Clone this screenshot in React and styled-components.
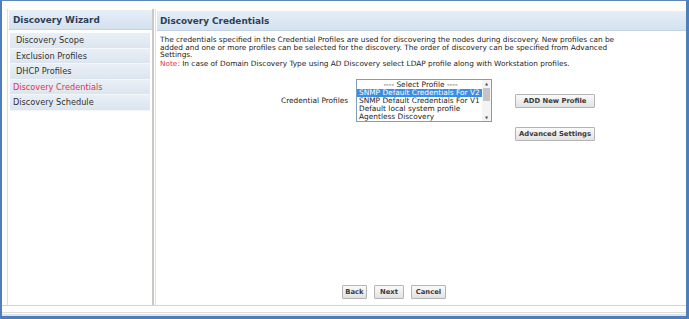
import React from 'react';
import styled, { createGlobalStyle } from 'styled-components';

const GlobalStyle = createGlobalStyle`
  html, body {
    margin: 0;
    padding: 0;
    background: #ffffff;
  }
  body {
    font-family: "DejaVu Sans", Verdana, sans-serif;
    color: #222;
  }
`;

const Window = styled.div`
  width: 689px;
  height: 319px;
  box-sizing: border-box;
  border-top: 1px solid #5d87b8;
  border-left: 2px solid #4f7fb8;
  border-right: 3px solid #4f7fb8;
  border-bottom: 3px solid #4f7fb8;
  background: #fffdf8;
  display: flex;
  flex-direction: column;
`;

const Body = styled.div`
  flex: 1;
  display: flex;
  padding: 8px 0 0 5px;
  min-height: 0;
`;

const Footer = styled.div`
  height: 10px;
  border-top: 1px solid #d4d4d4;
  background: linear-gradient(#ffffff 0, #ffffff 6px, #e4dcd4 6px, #e4dcd4 7px, #fbfaf5 7px, #fbfaf5 8px, #d9e6f5 8px);
`;

const Sidebar = styled.div`
  width: 143px;
  background: #fff;
  border-left: 1px solid #e6ddd4;
  border-right: 2px solid #c9c9c9;
  display: flex;
  flex-direction: column;
  padding: 1px 0 0 1px;
`;

const PanelHeader = styled.div`
  height: ${(p) => p.$h}px;
  display: flex;
  align-items: center;
  padding-left: ${(p) => p.$pad}px;
  background: linear-gradient(#e6eef7, #d4e1ef);
  border-bottom: 1px solid #c3d2e4;
  font-weight: bold;
  font-size: 8.9px;
  color: #2d3f55;
  white-space: nowrap;
`;

const Menu = styled.div`
  display: flex;
  flex-direction: column;
  padding: 3px 2px 0 1px;
`;

const MenuItem = styled.div`
  height: 14.5px;
  display: flex;
  align-items: center;
  padding-left: ${(p) => (p.$active || p.$last ? 3 : 6)}px;
  background: linear-gradient(#e9eff5, #dce5ef);
  border-bottom: 1px solid #f4f7fa;
  font-size: 8.2px;
  color: ${(p) => (p.$active ? '#e0344a' : '#333')};
  white-space: nowrap;
`;

const Main = styled.div`
  flex: 1;
  display: flex;
  flex-direction: column;
  background: #fff;
  border-left: 1px solid #e2e2e2;
  margin-left: 1px;
  padding-top: 2px;
  padding-left: 1px;
`;

const Content = styled.div`
  flex: 1;
  display: flex;
  flex-direction: column;
  padding: 5px 0 0 3px;
  font-size: 7.35px;
  line-height: 7.6px;
  color: #222;
  white-space: nowrap;
`;

const Para = styled.p`
  margin: 0;
`;

const Note = styled.p`
  margin: 1px 0 0;
`;

const NoteLabel = styled.span`
  color: #e0344a;
`;

const FormRow = styled.div`
  display: flex;
  margin-top: 12px;
  margin-left: 121px;
`;

const Label = styled.div`
  font-size: 7.4px;
  margin-top: 18px;
  width: 75px;
`;

const ListBox = styled.div`
  width: 136px;
  height: 43px;
  box-sizing: border-box;
  border: 1px solid #7f9db9;
  display: flex;
  background: #fff;
`;

const Options = styled.div`
  flex: 1;
  display: flex;
  flex-direction: column;
  padding-top: 1px;
  min-width: 0;
`;

const Option = styled.div`
  height: 8px;
  line-height: 8px;
  font-size: 7.4px;
  padding-left: 2px;
  text-align: ${(p) => (p.$center ? 'center' : 'left')};
  background: ${(p) => (p.$selected ? '#3a8ee6' : 'transparent')};
  color: ${(p) => (p.$selected ? '#fff' : '#222')};
  white-space: nowrap;
  overflow: hidden;
`;

const Scrollbar = styled.div`
  width: 9px;
  display: flex;
  flex-direction: column;
  align-items: center;
  background: #f4f4f4;
  font-size: 4px;
  color: #555;
`;

const ScrollThumb = styled.div`
  width: 7px;
  height: 13px;
  background: #c4c4c4;
  margin-top: 1px;
`;

const Spacer = styled.div`
  flex: 1;
`;

const Arrow = styled.div`
  height: 7px;
  line-height: 7px;
`;

const ButtonCol = styled.div`
  display: flex;
  flex-direction: column;
  gap: 19px;
  margin-left: 23px;
  margin-top: 15px;
`;

const Button = styled.button`
  width: ${(p) => p.$w}px;
  height: 14px;
  padding: 0;
  font-family: "DejaVu Sans", Verdana, sans-serif;
  font-weight: bold;
  font-size: 6.8px;
  color: #3a3a3a;
  background: linear-gradient(#fafafa, #e2e2e2);
  border: 1px solid #b4b4b4;
  border-radius: 1px;
`;

const ActionBar = styled.div`
  margin-top: auto;
  margin-bottom: 6px;
  display: flex;
  justify-content: center;
  gap: 7px;
  padding-right: 58px;
`;

const steps = [
  'Discovery Scope',
  'Exclusion Profiles',
  'DHCP Profiles',
  'Discovery Credentials',
  'Discovery Schedule',
];

const profiles = [
  'SNMP Default Credentials For V2',
  'SNMP Default Credentials For V1',
  'Default local system profile',
  'Agentless Discovery',
];

export default function App() {
  return (
    <>
      <GlobalStyle />
      <Window>
        <Body>
          <Sidebar>
            <PanelHeader $h={19} $pad={4}>Discovery Wizard</PanelHeader>
            <Menu>
              {steps.map((s, i) => (
                <MenuItem key={s} $active={i === 3} $last={i === 4}>{s}</MenuItem>
              ))}
            </Menu>
          </Sidebar>
          <Main>
            <PanelHeader $h={19} $pad={3}>Discovery Credentials</PanelHeader>
            <Content>
              <Para>
                The credentials specified in the Credential Profiles are used for discovering the nodes during discovery. New profiles can be
                <br />
                added and one or more profiles can be selected for the discovery. The order of discovery can be specified from Advanced
                <br />
                Settings.
              </Para>
              <Note>
                <NoteLabel>Note: </NoteLabel>
                In case of Domain Discovery Type using AD Discovery select LDAP profile along with Workstation profiles.
              </Note>
              <FormRow>
                <Label>Credential Profiles</Label>
                <ListBox>
                  <Options>
                    <Option $center>---- Select Profile ----</Option>
                    {profiles.map((p, i) => (
                      <Option key={p} $selected={i === 0}>{p}</Option>
                    ))}
                  </Options>
                  <Scrollbar>
                    <Arrow>▲</Arrow>
                    <ScrollThumb />
                    <Spacer />
                    <Arrow>▼</Arrow>
                  </Scrollbar>
                </ListBox>
                <ButtonCol>
                  <Button $w={80}>ADD New Profile</Button>
                  <Button $w={80}>Advanced Settings</Button>
                </ButtonCol>
              </FormRow>
              <ActionBar>
                <Button $w={25}>Back</Button>
                <Button $w={30}>Next</Button>
                <Button $w={35}>Cancel</Button>
              </ActionBar>
            </Content>
          </Main>
        </Body>
        <Footer />
      </Window>
    </>
  );
}
